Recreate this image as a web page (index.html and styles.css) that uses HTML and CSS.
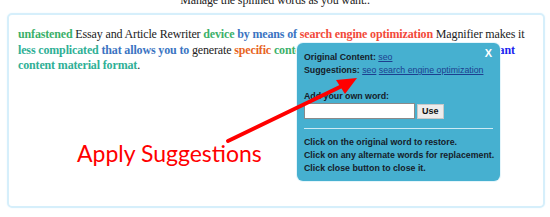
FILE: index.html
```html
<!DOCTYPE html>
<html lang="en">
<head>
    <meta charset="UTF-8">
    <meta name="viewport" content="width=device-width, initial-scale=1.0">
    <title>Spinner Demo</title>
    <link rel="stylesheet" href="styles.css">
</head>
<body>

    <div class="demo">
        <p class="intro">Manage the spinned words as you want..</p>

        <div class="spin-box">
            <p class="spun-text">
                <span class="w green">unfastened</span> Essay and Article Rewriter
                <span class="w green">device</span> <span class="w blue">by means of</span>
                <span class="w red">search engine optimization</span> Magnifier makes it
                <span class="w teal">less complicated</span> <span class="w blue">that allows you to</span>
                generate <span class="w orange">specific</span> <span class="w green">content</span>
                in a <span class="w royal">completely unique and very relevant</span>
                <span class="w teal">content material format</span>.
            </p>
        </div>

        <div class="suggest-popup">
            <span class="close-btn">X</span>
            <div class="row">Original Content: <a href="#">seo</a></div>
            <div class="row">Suggestions: <a href="#">seo</a> <a href="#">search engine optimization</a></div>
            <div class="row add-label">Add your own word:</div>
            <div class="add-form">
                <input type="text" class="word-input">
                <button class="use-btn">Use</button>
            </div>
            <div class="help">
                <div class="row">Click on the original word to restore.</div>
                <div class="row">Click on any alternate words for replacement.</div>
                <div class="row">Click close button to close it.</div>
            </div>
        </div>

        <svg class="arrow" width="550" height="217" viewBox="0 0 550 217">
            <line x1="228" y1="141" x2="342" y2="86" stroke="#ff0000" stroke-width="4" stroke-linecap="round"/>
            <polygon points="357,78 336,80 345,94" fill="#ff0000"/>
        </svg>

        <div class="callout">Apply Suggestions</div>
    </div>

</body>
</html>
```

FILE: styles.css
```css
:root {
    --box-border: #d6effb;
    --popup-bg: #46b0d0;
    --popup-text: #15202a;
    --link-color: #1d3f8f;
}

body {
    margin: 0;
    background-color: #ffffff;
    font-family: "Liberation Serif", "Times New Roman", serif;
    color: #222222;
    overflow: hidden;
}

.demo {
    position: relative;
    display: flow-root;
    width: 550px;
    height: 217px;
}

.intro {
    margin: -8px 0 0 0;
    text-align: center;
    font-size: 12px;
    letter-spacing: -0.15px;
    line-height: 16px;
}

/* Spun text box */
.spin-box {
    margin: 5px 5px 0 7px;
    height: 195px;
    border: 2px solid var(--box-border);
    border-radius: 5px;
    box-shadow: 0 0 2px #eaf7fd;
    padding: 12px 10px 0 9px;
    box-sizing: border-box;
}
.spun-text {
    margin: 0;
    font-size: 12px;
    letter-spacing: -0.15px;
    line-height: 15.5px;
}
.spun-text .w { font-weight: bold; }
.green { color: #3bb06a; }
.teal { color: #2fb096; }
.blue { color: #3b74c2; }
.royal { color: #1a1ff0; }
.red { color: #f24a3a; }
.orange { color: #e8641e; }

/* Suggestion popup */
.suggest-popup {
    position: absolute;
    left: 297px;
    top: 43px;
    width: 203px;
    height: 138px;
    box-sizing: border-box;
    padding: 8px 7px;
    background-color: var(--popup-bg);
    border-radius: 6px;
    box-shadow: 0 0 0 1px #e4f5fb;
    font-family: "Liberation Sans", Arial, sans-serif;
    font-weight: bold;
    font-size: 8.8px;
    color: var(--popup-text);
}
.suggest-popup .row {
    line-height: 13px;
    white-space: nowrap;
}
.suggest-popup a {
    color: var(--link-color);
    font-weight: normal;
    text-decoration: underline;
}
.close-btn {
    position: absolute;
    right: 8px;
    top: 4px;
    color: #ffffff;
    font-size: 11px;
}
.add-label { margin-top: 13px; }
.add-form {
    display: flex;
    align-items: center;
    gap: 2px;
}
.word-input {
    width: 111px;
    height: 16px;
    box-sizing: border-box;
    border: 1px solid #8a8a8a;
    margin: 0;
    padding: 0;
    background: #ffffff;
}
.use-btn {
    height: 15px;
    padding: 0 4px;
    margin: 0;
    border: 1px solid #c8c8c8;
    background: #ececec;
    font-family: "Liberation Sans", Arial, sans-serif;
    font-weight: bold;
    font-size: 9px;
    color: #111111;
}
.help {
    margin-top: 9px;
    padding-top: 7px;
    border-top: 1px solid #cdeaf4;
}

/* Annotation */
.arrow {
    position: absolute;
    left: 0;
    top: 0;
}
.callout {
    position: absolute;
    left: 77px;
    top: 139px;
    font-family: Lato, "Open Sans", sans-serif;
    font-size: 23px;
    color: #ff0000;
}
```
